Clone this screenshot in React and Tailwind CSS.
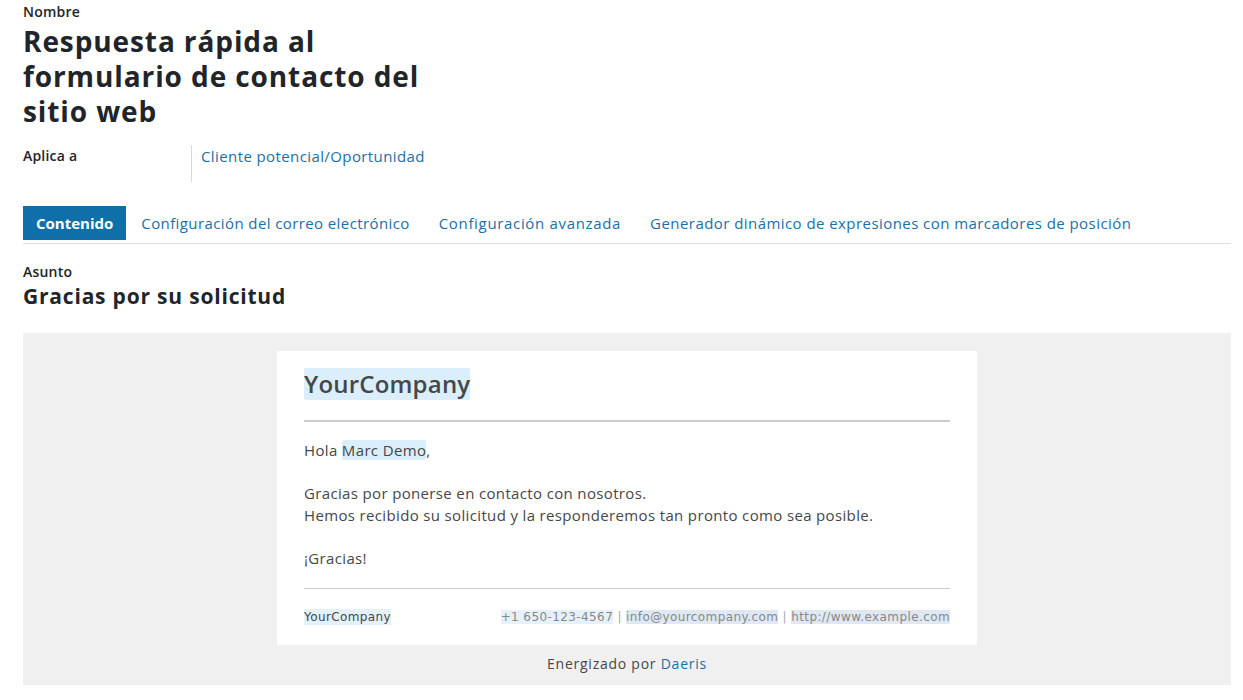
export default function App() {
  const poppins = { fontFamily: '"Open Sans", "Noto Sans", sans-serif' };
  return (
    <div className="w-[1243px] h-[700px] bg-white overflow-hidden text-[#212529]" style={poppins}>
      <div className="pl-[23px] pr-[12px] pt-[4px]">
        <div className="text-[14px] font-semibold leading-[16px] tracking-[0.2px] text-[#212529]">Nombre</div>
        <h1 className="mt-[4px] text-[28px] font-bold leading-[35px] text-[#212529] tracking-[0.9px]">
          Respuesta rápida al<br />formulario de contacto del<br />sitio web
        </h1>
        <div className="mt-[16px] flex">
          <div className="w-[168px] text-[14px] font-semibold leading-[20px] tracking-[0.2px] pt-[1px]">Aplica a</div>
          <div className="border-l border-[#d8d8d8] h-[37px] pl-[9px] pt-[1px] text-[15px] leading-[20px] tracking-[0.4px] text-[#1a6fa6]">
            Cliente potencial/Oportunidad
          </div>
        </div>
        <div className="mt-[24px] pb-[3px] flex border-b border-[#dee2e6] text-[15px] leading-[20px]">
          <div className="bg-[#0f6fa8] text-white font-bold px-[13px] py-[7px]">Contenido</div>
          <div className="text-[#1a6fa6] px-[15px] py-[7px] tracking-[0.4px]">Configuración del correo electrónico</div>
          <div className="text-[#1a6fa6] px-[14px] py-[7px] tracking-[0.67px]">Configuración avanzada</div>
          <div className="text-[#1a6fa6] px-[15px] py-[7px] tracking-[0.44px]">Generador dinámico de expresiones con marcadores de posición</div>
        </div>
        <div className="mt-[20px] text-[14px] font-semibold leading-[16px] tracking-[0.2px]">Asunto</div>
        <div className="mt-[3px] text-[21px] font-bold leading-[26px] tracking-[0.8px]">Gracias por su solicitud</div>
        <div className="mt-[24px] bg-[#f0f0f0] pt-[18px] pb-[11px] flex flex-col items-center">
          <div className="w-[700px] bg-white px-[27px] pt-[17px] pb-[20px] text-[#454748]">
            <div className="flex">
              <span className="bg-[#dbeefb] rounded-[2px] text-[24px] font-semibold leading-[32px] tracking-[0.2px]">YourCompany</span>
            </div>
            <div className="mt-[20px] h-[2px] bg-[#cccccc]"></div>
            <div className="mt-[17px] text-[15px] leading-[22px] tracking-[0.35px]">
              <div>Hola <span className="bg-[#dbeefb] rounded-[2px]">Marc Demo</span>,</div>
              <div className="h-[21px]"></div>
              <div>Gracias por ponerse en contacto con nosotros.</div>
              <div>Hemos recibido su solicitud y la responderemos tan pronto como sea posible.</div>
              <div className="h-[21px]"></div>
              <div>¡Gracias!</div>
            </div>
            <div className="mt-[19px] h-px bg-[#cccccc]"></div>
            <div className="mt-[20px] flex justify-between items-center text-[12px] leading-[16px] tracking-[0.4px]" style={{ fontFamily: '"DejaVu Sans", Verdana, sans-serif' }}>
              <span className="bg-[#e4f1fb] text-[#454748]">YourCompany</span>
              <span className="text-[#888888]">
                <span className="bg-[#e6f1fb]">+1 650-123-4567</span>
                <span className="text-[#aaaaaa]"> | </span>
                <span className="bg-[#e0e8f4]">info@yourcompany.com</span>
                <span className="text-[#aaaaaa]"> | </span>
                <span className="bg-[#e0e8f4]">http://www.example.com</span>
              </span>
            </div>
          </div>
          <div className="mt-[9px] text-[14px] leading-[20px] tracking-[0.75px] text-[#454748]">
            Energizado por <span className="text-[#1a6fa6]">Daeris</span>
          </div>
        </div>
      </div>
    </div>
  );
}
